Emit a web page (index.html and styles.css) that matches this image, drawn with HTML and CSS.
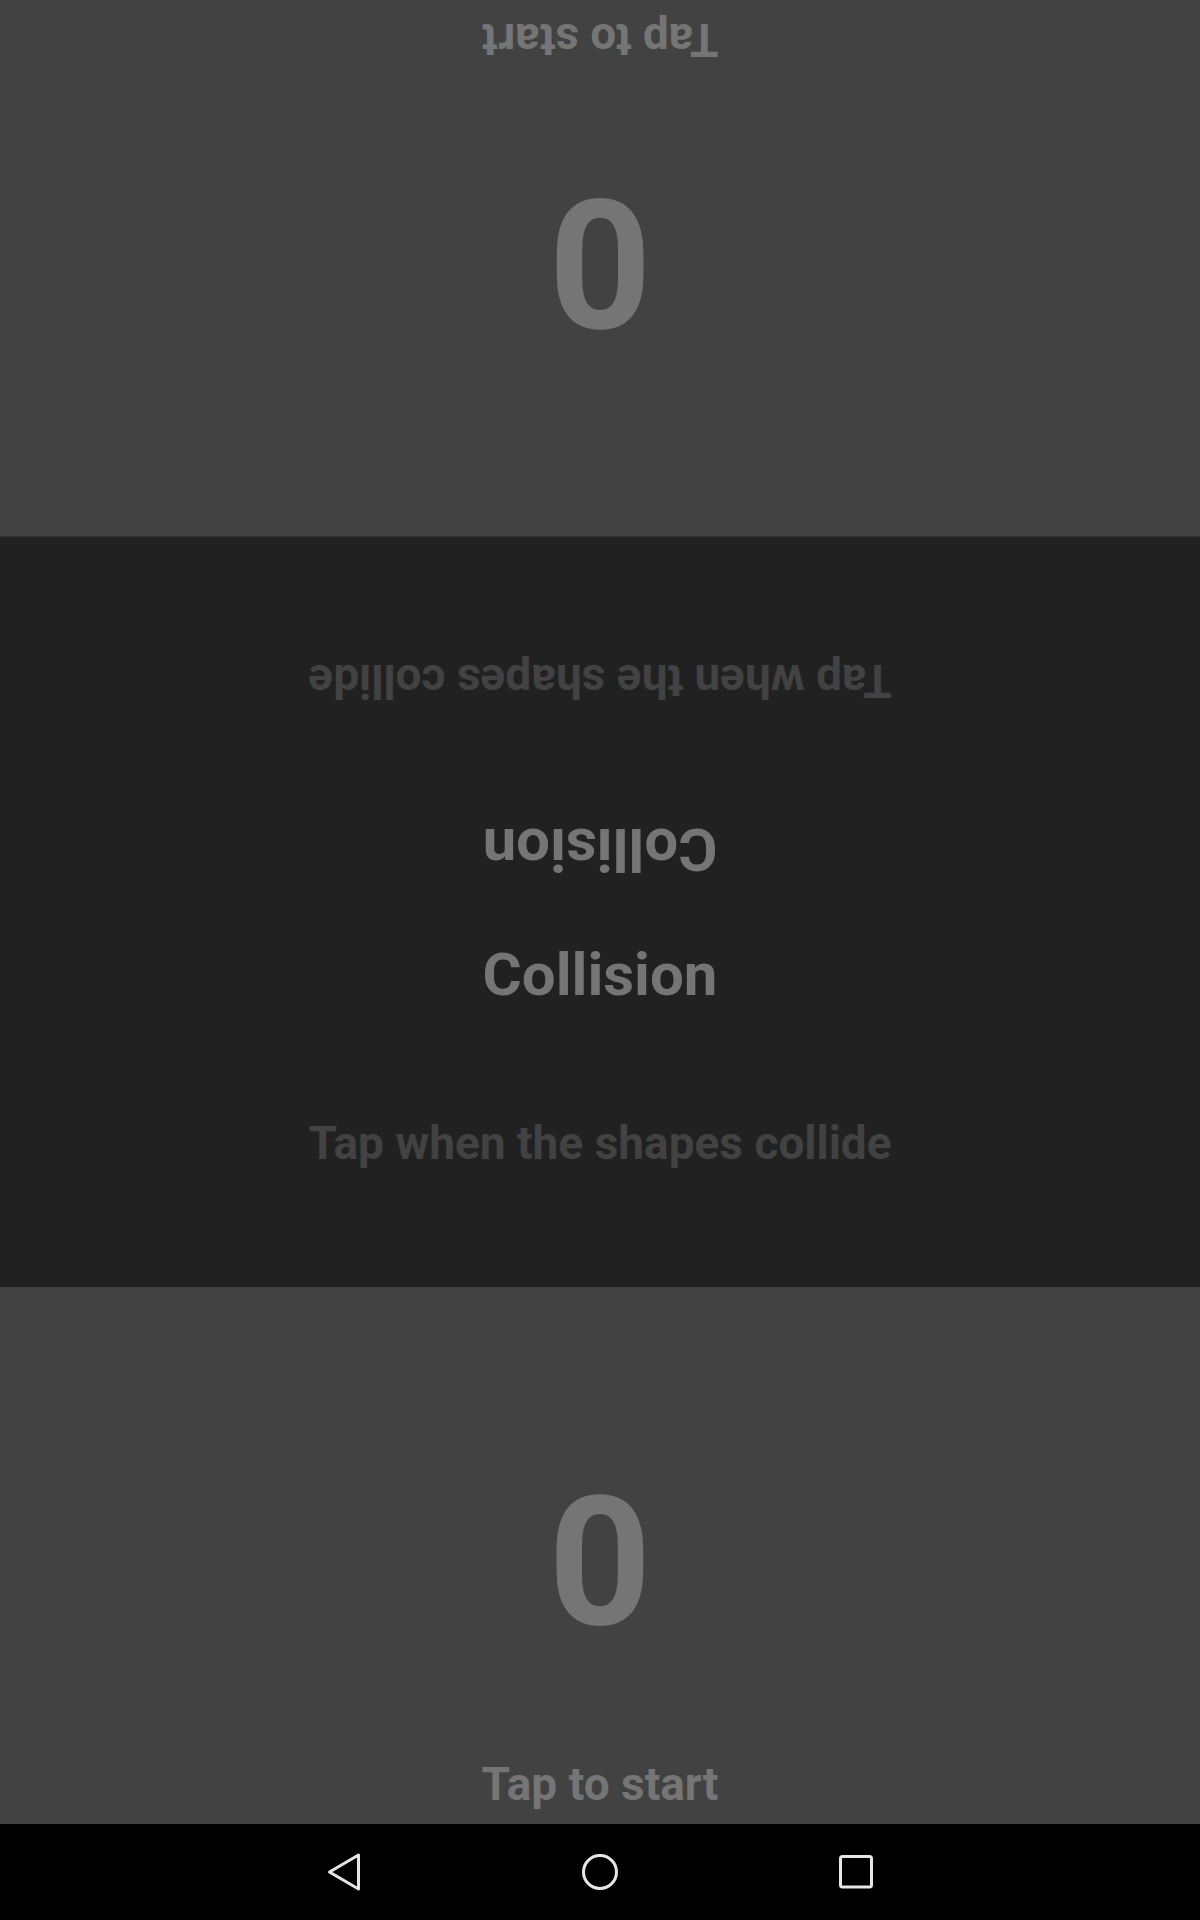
FILE: index.html
```html
<!DOCTYPE html>
<html lang="en">
<head>
<meta charset="utf-8">
<title>Collision</title>
<link rel="stylesheet" href="styles.css">
</head>
<body>
<div class="screen">
  <section class="player player-top">
    <div class="score">0</div>
    <div class="hint">Tap to start</div>
  </section>
  <section class="center">
    <div class="half half-top">
      <div class="title">Collision</div>
      <div class="subtitle">Tap when the shapes collide</div>
    </div>
    <div class="half">
      <div class="title">Collision</div>
      <div class="subtitle">Tap when the shapes collide</div>
    </div>
  </section>
  <section class="player">
    <div class="score">0</div>
    <div class="hint">Tap to start</div>
  </section>
  <nav class="navbar">
    <div class="navbtn">
      <svg width="40" height="40" viewBox="0 0 40 40"><polygon points="5.5,20 34.5,3 34.5,37" fill="none" stroke="#e6e6e6" stroke-width="3" stroke-linejoin="round"/></svg>
    </div>
    <div class="navbtn">
      <svg width="40" height="40" viewBox="0 0 40 40"><circle cx="20" cy="20" r="16.5" fill="none" stroke="#e6e6e6" stroke-width="3"/></svg>
    </div>
    <div class="navbtn">
      <svg width="40" height="40" viewBox="0 0 40 40"><rect x="4.5" y="4.5" width="31" height="30.5" rx="2" fill="none" stroke="#e6e6e6" stroke-width="3"/></svg>
    </div>
  </nav>
</div>
</body>
</html>
```

FILE: styles.css
```css
html, body {
  margin: 0;
  padding: 0;
  background: #000;
}

.screen {
  width: 1200px;
  height: 1920px;
  display: flex;
  flex-direction: column;
  font-family: Roboto, "Noto Sans", "Liberation Sans", sans-serif;
  font-weight: 700;
  overflow: hidden;
}

.player {
  height: 537px;
  background: #424242;
  display: flex;
  flex-direction: column;
  align-items: center;
  box-sizing: border-box;
  padding-top: 186px;
}

.player-top {
  transform: rotate(180deg);
}

.score {
  font-size: 180px;
  line-height: 180px;
  color: #757575;
}

.hint {
  margin-top: 108px;
  font-size: 46px;
  line-height: 46px;
  color: #757575;
}

.center {
  height: 751px;
  background: #212121;
  display: flex;
  flex-direction: column;
}

.half {
  flex: 1;
  display: flex;
  flex-direction: column;
  align-items: center;
  padding-top: 33px;
}

.half-top {
  transform: rotate(180deg);
}

.title {
  font-size: 60px;
  line-height: 60px;
  color: #757575;
}

.subtitle {
  margin-top: 115px;
  font-size: 46px;
  line-height: 46px;
  color: #424242;
}

.navbar {
  height: 96px;
  flex: none;
  background: #000;
  display: flex;
  justify-content: center;
  align-items: center;
}

.navbtn {
  width: 256px;
  height: 96px;
  display: flex;
  align-items: center;
  justify-content: center;
}

.navbtn svg {
  display: block;
}
```
